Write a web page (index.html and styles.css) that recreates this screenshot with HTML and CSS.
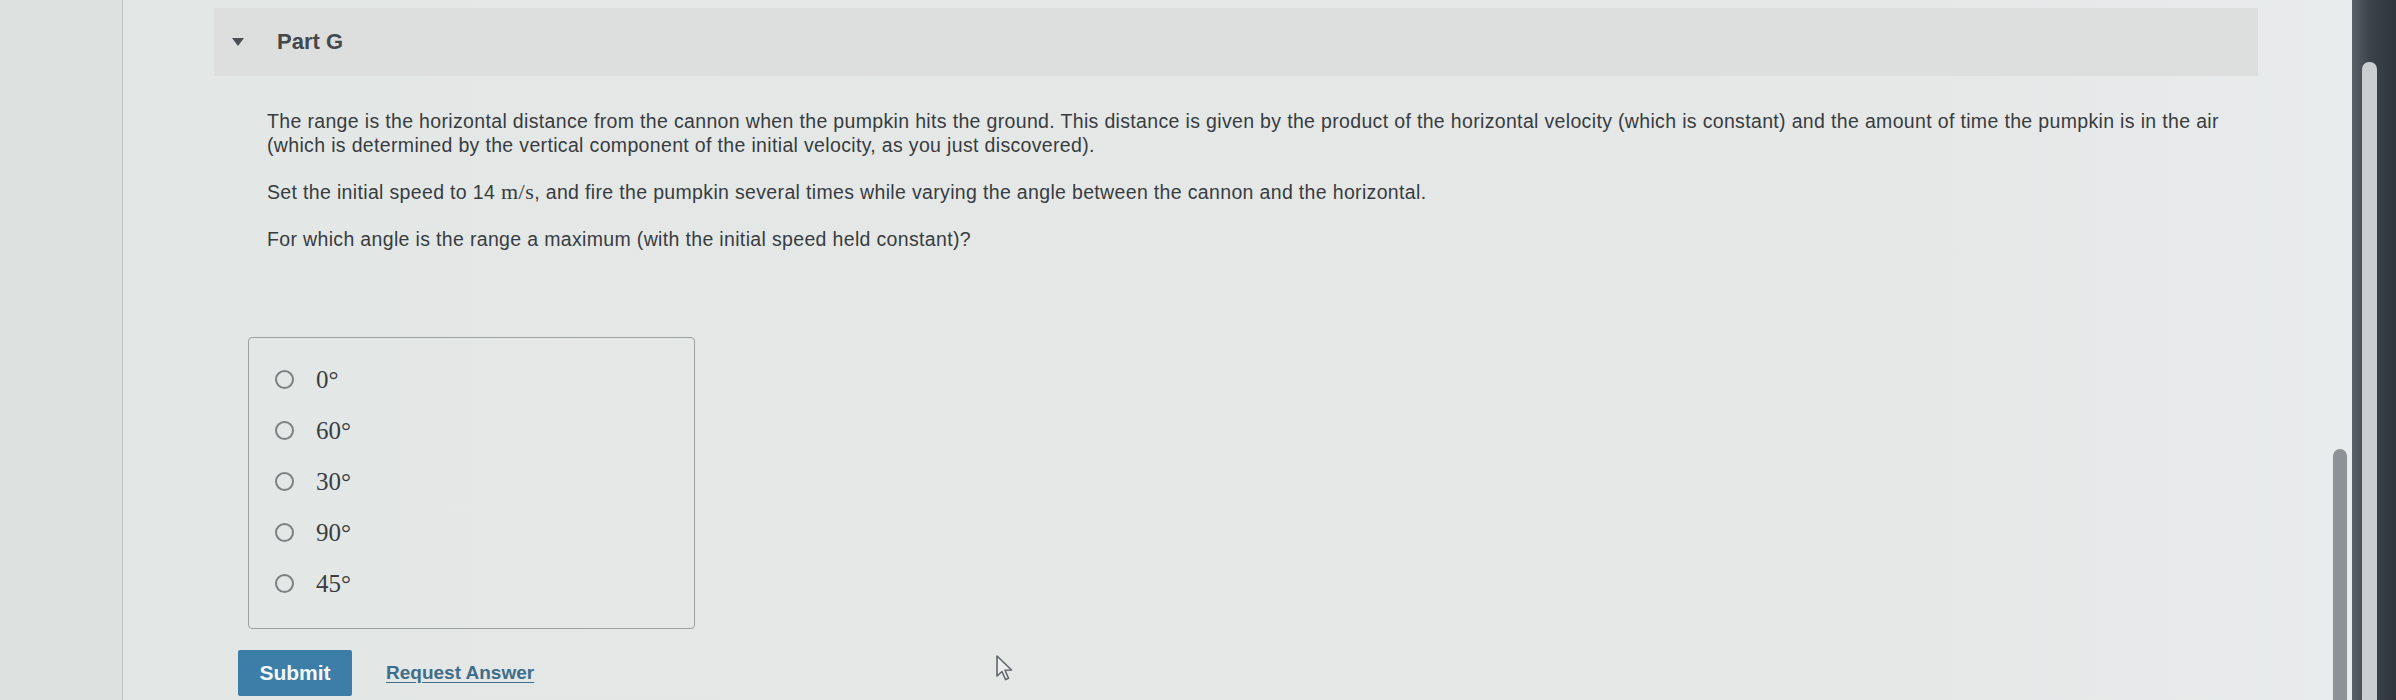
FILE: index.html
```html
<!DOCTYPE html>
<html lang="en">
<head>
<meta charset="utf-8">
<title>Part G</title>
<link rel="stylesheet" href="styles.css">
</head>
<body>
<div class="screen">
  <div class="gutter"></div>
  <main class="page">
    <section class="part">
      <header class="part-head">
        <span class="caret"></span>
        <h2 class="part-title">Part G</h2>
      </header>
      <div class="part-body">
        <p class="text">The range is the horizontal distance from the cannon when the pumpkin hits the ground. This distance is given by the product of the horizontal velocity (which is constant) and the amount of time the pumpkin is in the air (which is determined by the vertical component of the initial velocity, as you just discovered).</p>
        <p class="text">Set the initial speed to 14 <span class="math">m/s</span>, and fire the pumpkin several times while varying the angle between the cannon and the horizontal.</p>
        <p class="text last">For which angle is the range a maximum (with the initial speed held constant)?</p>
        <div class="choices">
          <label class="choice"><span class="radio"></span><span class="choice-label">0°</span></label>
          <label class="choice"><span class="radio"></span><span class="choice-label">60°</span></label>
          <label class="choice"><span class="radio"></span><span class="choice-label">30°</span></label>
          <label class="choice"><span class="radio"></span><span class="choice-label">90°</span></label>
          <label class="choice"><span class="radio"></span><span class="choice-label">45°</span></label>
        </div>
        <div class="actions">
          <button class="submit" type="button">Submit</button>
          <a class="request" href="#">Request Answer</a>
        </div>
      </div>
    </section>
    <div class="inner-thumb"></div>
  </main>
  <div class="bezel"><div class="bezel-bar"></div></div>
  <svg class="cursor" width="20" height="28" viewBox="0 0 20 28" aria-hidden="true">
    <path d="M2 2 L2 22 L7 17.5 L10.5 25.5 L13.5 24.2 L10 16.2 L16.5 16 Z" fill="#eceeee" stroke="#60676c" stroke-width="1.6" stroke-linejoin="round"/>
  </svg>
</div>
</body>
</html>
```

FILE: styles.css
```css
* { box-sizing: border-box; }

html, body {
  margin: 0;
  padding: 0;
  width: 2396px;
  height: 700px;
  overflow: hidden;
  background: #e4e8e7;
}

.screen {
  position: relative;
  display: flex;
  width: 2396px;
  height: 700px;
  font-family: "Liberation Sans", Arial, sans-serif;
  color: #383c3f;
}

.gutter {
  width: 123px;
  flex: none;
  background: #dde1e0;
  border-right: 1px solid #bfc4c3;
}

.page {
  position: relative;
  flex: 1;
  padding: 8px 94px 0 91px;
  background: linear-gradient(90deg, #e3e7e6 0%, #e5e8e7 80%, #e9ecec 100%);
}

.part-head {
  display: flex;
  align-items: center;
  height: 68px;
  padding-left: 18px;
  gap: 33px;
  background: #dcdfde;
}

.caret {
  width: 0;
  height: 0;
  border-left: 6px solid transparent;
  border-right: 6px solid transparent;
  border-top: 8px solid #4a4f54;
}

.part-title {
  margin: 0;
  font-size: 22px;
  font-weight: 700;
  color: #43484c;
}

.part-body {
  padding-left: 34px;
}

.text {
  margin: 0 0 23px 19px;
  max-width: 1980px;
  font-size: 19.5px;
  line-height: 24px;
  letter-spacing: 0.34px;
}

.text:first-child { margin-top: 33px; }
.text.last { margin-bottom: 0; }

.math {
  font-family: "Liberation Serif", "Times New Roman", serif;
  font-size: 22px;
  letter-spacing: 0.5px;
}

.choices {
  width: 447px;
  margin-top: 86px;
  padding: 16px 0 19px 26px;
  border: 1.5px solid #9ca1a1;
  border-radius: 4px;
}

.choice {
  display: flex;
  align-items: center;
  height: 51px;
  gap: 22px;
}

.radio {
  width: 19px;
  height: 19px;
  flex: none;
  border: 2px solid #7c8183;
  border-radius: 50%;
}

.choice-label {
  font-family: "Liberation Serif", "Times New Roman", serif;
  font-size: 25px;
  color: #3a3e41;
}

.actions {
  display: flex;
  align-items: center;
  gap: 34px;
  margin-top: 21px;
  margin-left: -10px;
}

.submit {
  width: 114px;
  height: 46px;
  padding: 0;
  border: none;
  border-radius: 2px;
  background: #3c7ea7;
  color: #f4f8fa;
  font-family: "Liberation Sans", Arial, sans-serif;
  font-size: 21px;
  font-weight: 700;
}

.request {
  color: #3f6e8a;
  font-size: 19px;
  font-weight: 700;
  text-decoration: underline;
  text-underline-offset: 3px;
}

.inner-thumb {
  position: absolute;
  left: 2210px;
  top: 449px;
  width: 14px;
  height: 260px;
  border-radius: 7px;
  background: #8d9297;
}

.bezel {
  position: relative;
  width: 44px;
  flex: none;
  background: linear-gradient(90deg, #5a6167 0%, #3c434a 40%, #2f353b 100%);
}

.bezel-bar {
  position: absolute;
  left: 10px;
  top: 62px;
  width: 15px;
  height: 660px;
  border-radius: 7px 7px 0 0;
  background: #c9ced1;
}

.cursor {
  position: absolute;
  left: 995px;
  top: 654px;
}
```
